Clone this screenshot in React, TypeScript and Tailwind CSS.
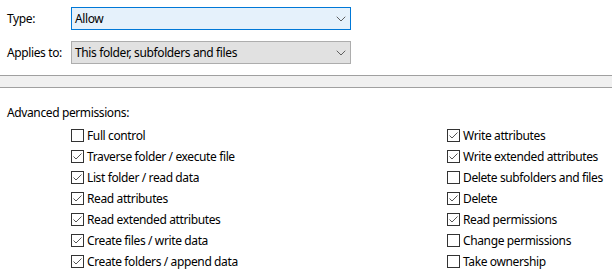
import { ChevronDown } from 'lucide-react'

const left = [
  { label: 'Full control', checked: false },
  { label: 'Traverse folder / execute file', checked: true },
  { label: 'List folder / read data', checked: true },
  { label: 'Read attributes', checked: true },
  { label: 'Read extended attributes', checked: true },
  { label: 'Create files / write data', checked: true },
  { label: 'Create folders / append data', checked: true },
]

const right = [
  { label: 'Write attributes', checked: true },
  { label: 'Write extended attributes', checked: true },
  { label: 'Delete subfolders and files', checked: false },
  { label: 'Delete', checked: true },
  { label: 'Read permissions', checked: true },
  { label: 'Change permissions', checked: false },
  { label: 'Take ownership', checked: false },
]

function Checkbox({ checked }: { checked: boolean }) {
  return (
    <span className="w-[13px] h-[13px] border border-[#333333] bg-white flex items-center justify-center shrink-0">
      {checked && (
        <svg width="11" height="11" viewBox="0 0 11 11">
          <path d="M1.5 5.5 L4 8 L9.5 2.5" fill="none" stroke="#555555" strokeWidth="1" />
        </svg>
      )}
    </span>
  )
}

function Row({ label, checked }: { label: string; checked: boolean }) {
  return (
    <div className="flex items-center h-[21px] gap-[3px]">
      <Checkbox checked={checked} />
      <span className="whitespace-nowrap">{label}</span>
    </div>
  )
}

function Combo({ value, focused }: { value: string; focused?: boolean }) {
  return (
    <div
      className={
        focused
          ? 'w-[280px] h-[23px] border border-[#0078d7] bg-[#e5f1fb] flex items-center justify-between pl-[3px] pr-[1px]'
          : 'w-[280px] h-[23px] border border-[#adadad] bg-[#e1e1e1] flex items-center justify-between pl-[3px] pr-[1px]'
      }
    >
      <span>{value}</span>
      <ChevronDown size={16} strokeWidth={1.4} className="text-[#555555]" />
    </div>
  )
}

export default function App() {
  return (
    <div
      className="w-[612px] h-[279px] bg-white text-black text-[12px] leading-[16px] tracking-[-0.38px] overflow-hidden"
      style={{ fontFamily: '"Noto Sans", "Liberation Sans", sans-serif' }}
    >
      <div className="px-[7px] pt-[7px]">
        <div className="flex items-center">
          <span className="w-[64px]">Type:</span>
          <Combo value="Allow" focused />
        </div>
        <div className="flex items-center mt-[11px]">
          <span className="w-[64px]">Applies to:</span>
          <Combo value="This folder, subfolders and files" />
        </div>
      </div>

      <div className="mt-[11px] h-[13px] border-y border-[#a0a0a0] bg-[#f0f0f0]" />

      <div className="px-[7px] mt-[17px]">Advanced permissions:</div>

      <div className="grid grid-cols-[376px_1fr] pl-[71px] mt-[4px]">
        <div>
          {left.map((p) => (
            <Row key={p.label} label={p.label} checked={p.checked} />
          ))}
        </div>
        <div>
          {right.map((p) => (
            <Row key={p.label} label={p.label} checked={p.checked} />
          ))}
        </div>
      </div>
    </div>
  )
}
